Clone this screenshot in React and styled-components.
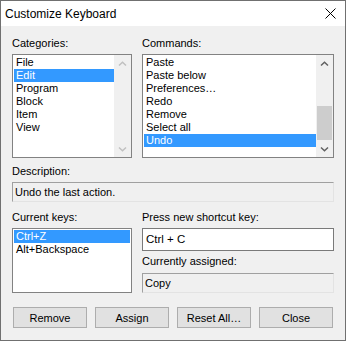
import styled, { createGlobalStyle } from 'styled-components';

const GlobalStyle = createGlobalStyle`
    html, body {
        margin: 0;
        padding: 0;
        background: #f0f0f0;
    }
    * {
        box-sizing: border-box;
    }
`;

const categories = ['File', 'Edit', 'Program', 'Block', 'Item', 'View'];
const commands = [
    'Paste',
    'Paste below',
    'Preferences…',
    'Redo',
    'Remove',
    'Select all',
    'Undo',
];
const currentKeys = ['Ctrl+Z', 'Alt+Backspace'];
const buttons = ['Remove', 'Assign', 'Reset All…', 'Close'];

const Window = styled.div`
    width: 346px;
    height: 341px;
    border: 1px solid #707070;
    display: flex;
    flex-direction: column;
    font-family: 'Liberation Sans', Arial, sans-serif;
    font-size: 11px;
    color: #000;
`;

const TitleBar = styled.div`
    height: 25px;
    flex: none;
    background: #fff;
    display: flex;
    align-items: center;
    justify-content: space-between;
    padding: 0 9px 0 4px;
    font-size: 12px;
`;

const Client = styled.div`
    flex: 1;
    background: #f0f0f0;
    padding: 11px 11px 12px;
    display: flex;
    flex-direction: column;
`;

const Columns = styled.div`
    display: grid;
    grid-template-columns: 120px 192px;
    column-gap: 10px;
    margin-top: ${(p) => p.$top || 0}px;
`;

const Field = styled.div`
    display: flex;
    flex-direction: column;
    margin-top: ${(p) => p.$top || 0}px;
`;

const Label = styled.div`
    height: 13px;
    line-height: 13px;
    margin-bottom: ${(p) => p.$gap || 4}px;
    white-space: nowrap;
`;

const ListBox = styled.div`
    height: ${(p) => p.$height}px;
    border: 1px solid #828282;
    background: #fff;
    display: flex;
`;

const Items = styled.div`
    flex: 1;
    padding: ${(p) => (p.$full ? '1px' : '1px 0 1px 1px')};
    overflow: hidden;
`;

const Item = styled.div`
    height: 13px;
    line-height: 13px;
    padding-left: 2px;
    white-space: nowrap;
    background: ${(p) => (p.$selected ? '#3399ff' : 'transparent')};
    color: ${(p) => (p.$selected ? '#fff' : '#000')};
`;

const ScrollBar = styled.div`
    width: 17px;
    flex: none;
    background: #f0f0f0;
    display: flex;
    flex-direction: column;
`;

const ScrollButton = styled.div`
    height: 17px;
    flex: none;
    display: flex;
    align-items: center;
    justify-content: center;
`;

const Track = styled.div`
    flex: 1;
    display: flex;
    flex-direction: column;
    justify-content: flex-end;
`;

const Thumb = styled.div`
    height: 34px;
    margin: 0 1px;
    background: #cdcdcd;
`;

const ReadOnlyBox = styled.div`
    height: 20px;
    border: 1px solid;
    border-color: #a0a0a0 #e3e3e3 #e3e3e3 #a0a0a0;
    background: #f0f0f0;
    padding: 0 2px;
    line-height: 18px;
    white-space: nowrap;
`;

const Input = styled.div`
    height: 23px;
    border: 1px solid #7a7a7a;
    background: #fff;
    padding: 0 3px;
    line-height: 21px;
    font-size: 11.5px;
    margin-bottom: 4px;
`;

const ButtonRow = styled.div`
    display: flex;
    justify-content: space-between;
    margin: auto 1px 0;
`;

const Button = styled.div`
    width: 74px;
    height: 21px;
    border: 1px solid #adadad;
    background: #e1e1e1;
    display: flex;
    align-items: center;
    justify-content: center;
`;

function Chevron({ down, disabled }) {
    return (
        <svg width="9" height="6" viewBox="0 0 9 6">
            <polyline
                points={down ? '1,1.5 4.5,4.8 8,1.5' : '1,4.5 4.5,1.2 8,4.5'}
                fill="none"
                stroke={disabled ? '#c0c0c0' : '#606060'}
                strokeWidth="1.5"
            />
        </svg>
    );
}

function Scroll({ disabled }) {
    return (
        <ScrollBar>
            <ScrollButton>
                <Chevron disabled={disabled} />
            </ScrollButton>
            <Track>{!disabled && <Thumb />}</Track>
            <ScrollButton>
                <Chevron down disabled={disabled} />
            </ScrollButton>
        </ScrollBar>
    );
}

export default function App() {
    return (
        <>
            <GlobalStyle />
            <Window>
                <TitleBar>
                    <span>Customize Keyboard</span>
                    <svg width="11" height="11" viewBox="0 0 11 11">
                        <path
                            d="M0.5 0.5 L10.5 10.5 M10.5 0.5 L0.5 10.5"
                            stroke="#000"
                            strokeWidth="1"
                        />
                    </svg>
                </TitleBar>
                <Client>
                    <Columns>
                        <Field>
                            <Label>Categories:</Label>
                            <ListBox $height={104}>
                                <Items>
                                    {categories.map((c) => (
                                        <Item key={c} $selected={c === 'Edit'}>
                                            {c}
                                        </Item>
                                    ))}
                                </Items>
                                <Scroll disabled />
                            </ListBox>
                        </Field>
                        <Field>
                            <Label>Commands:</Label>
                            <ListBox $height={104}>
                                <Items>
                                    {commands.map((c) => (
                                        <Item key={c} $selected={c === 'Undo'}>
                                            {c}
                                        </Item>
                                    ))}
                                </Items>
                                <Scroll />
                            </ListBox>
                        </Field>
                    </Columns>

                    <Field $top={7}>
                        <Label>Description:</Label>
                        <ReadOnlyBox>Undo the last action.</ReadOnlyBox>
                    </Field>

                    <Columns $top={9}>
                        <Field>
                            <Label>Current keys:</Label>
                            <ListBox $height={65}>
                                <Items $full>
                                    {currentKeys.map((k) => (
                                        <Item key={k} $selected={k === 'Ctrl+Z'}>
                                            {k}
                                        </Item>
                                    ))}
                                </Items>
                            </ListBox>
                        </Field>
                        <Field>
                            <Label>Press new shortcut key:</Label>
                            <Input>Ctrl + C</Input>
                            <Label $gap={5}>Currently assigned:</Label>
                            <ReadOnlyBox>Copy</ReadOnlyBox>
                        </Field>
                    </Columns>

                    <ButtonRow>
                        {buttons.map((b) => (
                            <Button key={b}>{b}</Button>
                        ))}
                    </ButtonRow>
                </Client>
            </Window>
        </>
    );
}
